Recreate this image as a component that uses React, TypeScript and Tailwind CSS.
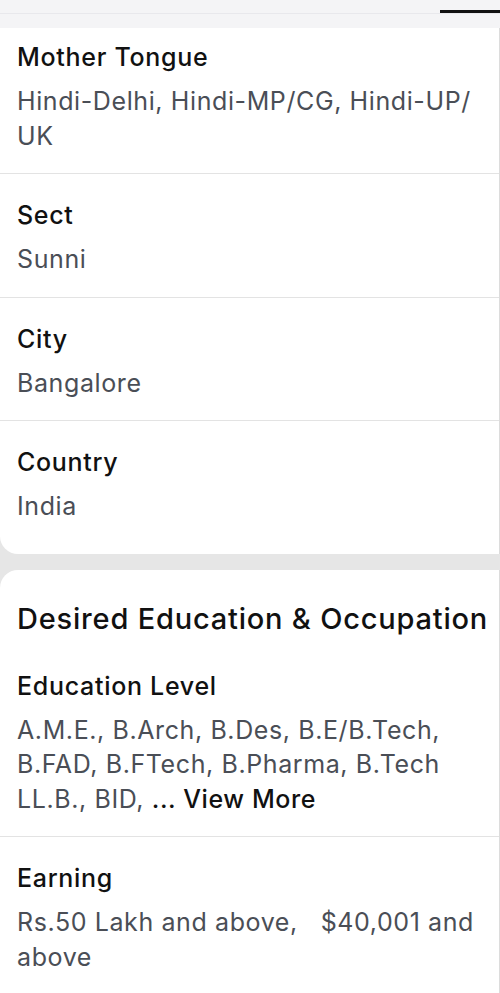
import React from 'react';

type Field = { label: string; lines: React.ReactNode[] };

const basics: Field[] = [
  { label: 'Mother Tongue', lines: ['Hindi-Delhi, Hindi-MP/CG, Hindi-UP/', 'UK'] },
  { label: 'Sect', lines: ['Sunni'] },
  { label: 'City', lines: ['Bangalore'] },
  { label: 'Country', lines: ['India'] },
];

const education: Field[] = [
  {
    label: 'Education Level',
    lines: [
      'A.M.E., B.Arch, B.Des, B.E/B.Tech,',
      'B.FAD, B.FTech, B.Pharma, B.Tech',
      <>
        LL.B., BID, <span className="font-medium text-[#111111]">... View More</span>
      </>,
    ],
  },
  { label: 'Earning', lines: ['Rs.50 Lakh and above,\u00a0\u00a0 $40,001 and', 'above'] },
];

const FieldRow: React.FC<{ field: Field; first?: boolean; last?: boolean }> = ({ field, first, last }) => (
  <div className={`pl-[17px] ${last ? '' : 'border-b border-[#e3e3e3]'}`}>
    <div className={`${first ? 'pt-[14px]' : 'pt-[26px]'} pb-[20px]`}>
      <div className="text-[25px] leading-[30px] font-medium text-[#111111] tracking-[0.7px] whitespace-nowrap">{field.label}</div>
      <div className="mt-[12px] text-[25px] leading-[34.5px] text-[#4a4e56] tracking-[0.6px] whitespace-nowrap">
        {field.lines.map((l, i) => (
          <div key={i}>{l}</div>
        ))}
      </div>
    </div>
  </div>
);

const App: React.FC = () => {
  return (
    <div className="w-[500px] h-[993px] overflow-hidden bg-[#e6e6e6]" style={{ fontFamily: 'Inter, "Noto Sans", sans-serif' }}>
      {/* Tab strip */}
      <div className="bg-[#f4f4f6]">
        <div className="relative h-[14px] border-b border-[#e8e8ec]">
          <div className="absolute right-0 top-[10px] h-[3px] w-[60px] bg-[#111111]" />
        </div>
        <div className="h-[14px]" />
      </div>

      {/* Basic details card */}
      <div className="bg-white rounded-bl-[18px] border-r border-[#dcdcdc] pb-[10px]">
        {basics.map((f, i) => (
          <FieldRow key={f.label} field={f} first={i === 0} last={i === basics.length - 1} />
        ))}
      </div>

      <div className="h-[16px]" />

      {/* Desired education card */}
      <div className="bg-white rounded-tl-[18px] border-r border-[#dcdcdc] h-[440px]">
        <div className="pl-[17px] pt-[31px] pb-[8px] text-[29px] leading-[36px] font-medium text-[#111111] tracking-[0.8px] whitespace-nowrap">
          Desired Education &amp; Occupation
        </div>
        {education.map((f, i) => (
          <FieldRow key={f.label} field={f} last={i === education.length - 1} />
        ))}
      </div>
    </div>
  );
};

export default App;
